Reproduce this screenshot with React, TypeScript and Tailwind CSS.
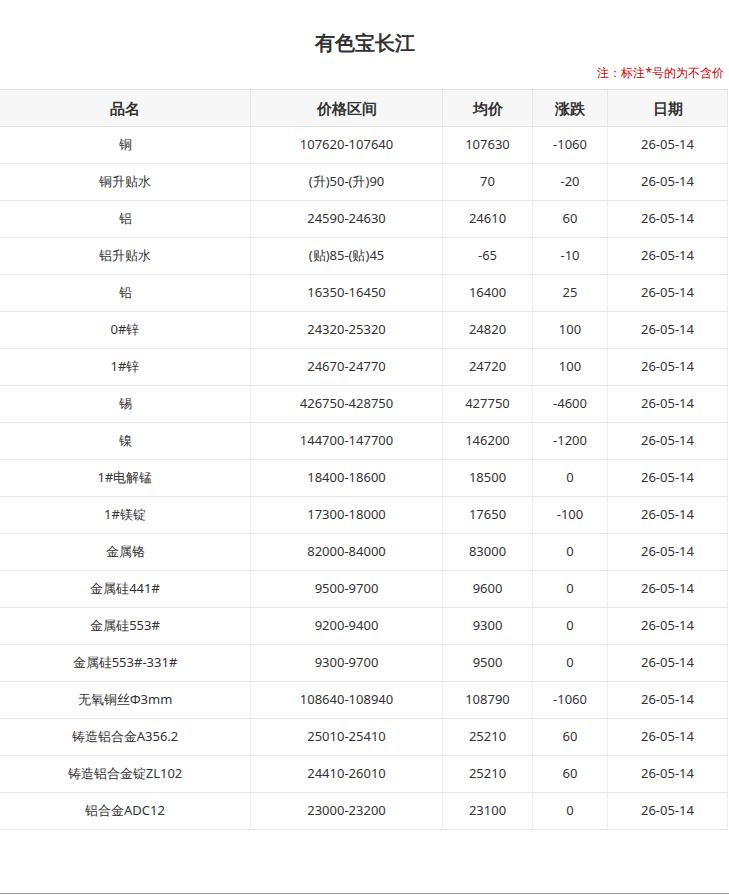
const rows: string[][] = [
  ["铜", "107620-107640", "107630", "-1060"],
  ["铜升贴水", "(升)50-(升)90", "70", "-20"],
  ["铝", "24590-24630", "24610", "60"],
  ["铝升贴水", "(贴)85-(贴)45", "-65", "-10"],
  ["铅", "16350-16450", "16400", "25"],
  ["0#锌", "24320-25320", "24820", "100"],
  ["1#锌", "24670-24770", "24720", "100"],
  ["锡", "426750-428750", "427750", "-4600"],
  ["镍", "144700-147700", "146200", "-1200"],
  ["1#电解锰", "18400-18600", "18500", "0"],
  ["1#镁锭", "17300-18000", "17650", "-100"],
  ["金属铬", "82000-84000", "83000", "0"],
  ["金属硅441#", "9500-9700", "9600", "0"],
  ["金属硅553#", "9200-9400", "9300", "0"],
  ["金属硅553#-331#", "9300-9700", "9500", "0"],
  ["无氧铜丝Φ3mm", "108640-108940", "108790", "-1060"],
  ["铸造铝合金A356.2", "25010-25410", "25210", "60"],
  ["铸造铝合金锭ZL102", "24410-26010", "25210", "60"],
  ["铝合金ADC12", "23000-23200", "23100", "0"],
];

const cols = "grid grid-cols-[250px_192px_90px_75px_121px]";

export default function App() {
  return (
    <div className="w-[729px] h-[895px] bg-white text-[#333] font-['Noto_Sans_CJK_SC',sans-serif] flex flex-col">
      <h1 className="pt-[29px] text-center text-[20px] font-bold leading-[28px] text-[#333]">有色宝长江</h1>
      <p className="mt-[8px] pr-[5px] text-right text-[12px] leading-[16px] text-[#c00]">注：标注*号的为不含价</p>
      <div className="mt-[8px] w-[728px] border-t border-[#e3e3e3]">
        <div className={`${cols} h-[37px] bg-[#f7f7f7] border-b border-[#e3e3e3] text-[15px] font-bold text-[#333]`}>
          {["品名", "价格区间", "均价", "涨跌", "日期"].map((h, i) => (
            <div key={h} className={`flex items-center justify-center ${i ? "border-l border-[#e6e6e6]" : ""} ${i === 4 ? "border-r" : ""}`}>{h}</div>
          ))}
        </div>
        {rows.map((r) => (
          <div key={r[0]} className={`${cols} h-[37px] border-b border-[#e6e6e6] text-[13px] text-[#333] font-['Liberation_Serif','Noto_Sans_CJK_SC',serif]`}>
            {[...r, "26-05-14"].map((c, i) => (
              <div key={i} className={`flex items-center justify-center ${i ? "border-l border-[#eeeeee]" : ""} ${i === 4 ? "border-r" : ""}`}>{c}</div>
            ))}
          </div>
        ))}
      </div>
      <div className="mt-auto mb-[1px] h-[1px] bg-[#999]" />
    </div>
  );
}
